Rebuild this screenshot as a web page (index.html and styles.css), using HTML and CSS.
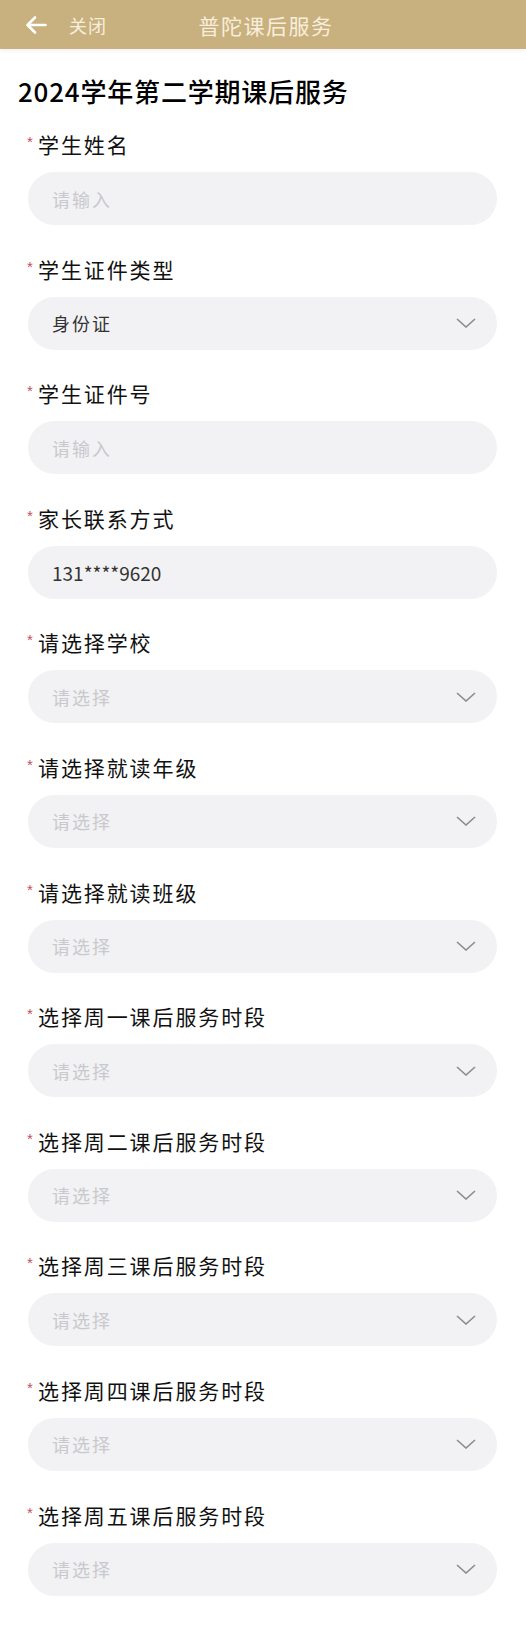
FILE: index.html
```html
<!doctype html>
<html lang="zh-cn">
<head>
	<meta charset="utf-8">
	<title>普陀课后服务</title>
	<link rel="stylesheet" href="styles.css">
</head>
<body>

<!-- 顶部导航 -->
<div class="topBar">
	<div class="topLeft">
		<svg class="backIco" width="22" height="18" viewBox="0 0 22 18"><path d="M2.5 9H20.5M10 1.5L2.5 9L10 16.5" fill="none" stroke="#fff" stroke-width="2.6" stroke-linecap="round" stroke-linejoin="round"/></svg>
		<span class="closeTxt">关闭</span>
	</div>
	<div class="topTitle">普陀课后服务</div>
</div>

<div class="formBox">
	<h1 class="formTit">2024学年第二学期课后服务</h1>

	<div class="item">
		<div class="lab"><i>*</i>学生姓名</div>
		<div class="ipt"><span class="ph">请输入</span></div>
	</div>
	<div class="item">
		<div class="lab"><i>*</i>学生证件类型</div>
		<div class="ipt sel"><span class="val">身份证</span><svg class="arr" width="20" height="10" viewBox="0 0 20 10"><path d="M1 1L10 9L19 1" fill="none" stroke="#8c8c8c" stroke-width="1.6"/></svg></div>
	</div>
	<div class="item">
		<div class="lab"><i>*</i>学生证件号</div>
		<div class="ipt"><span class="ph">请输入</span></div>
	</div>
	<div class="item">
		<div class="lab"><i>*</i>家长联系方式</div>
		<div class="ipt"><span class="val num">131****9620</span></div>
	</div>
	<div class="item">
		<div class="lab"><i>*</i>请选择学校</div>
		<div class="ipt sel"><span class="ph">请选择</span><svg class="arr" width="20" height="10" viewBox="0 0 20 10"><path d="M1 1L10 9L19 1" fill="none" stroke="#8c8c8c" stroke-width="1.6"/></svg></div>
	</div>
	<div class="item">
		<div class="lab"><i>*</i>请选择就读年级</div>
		<div class="ipt sel"><span class="ph">请选择</span><svg class="arr" width="20" height="10" viewBox="0 0 20 10"><path d="M1 1L10 9L19 1" fill="none" stroke="#8c8c8c" stroke-width="1.6"/></svg></div>
	</div>
	<div class="item">
		<div class="lab"><i>*</i>请选择就读班级</div>
		<div class="ipt sel"><span class="ph">请选择</span><svg class="arr" width="20" height="10" viewBox="0 0 20 10"><path d="M1 1L10 9L19 1" fill="none" stroke="#8c8c8c" stroke-width="1.6"/></svg></div>
	</div>
	<div class="item">
		<div class="lab"><i>*</i>选择周一课后服务时段</div>
		<div class="ipt sel"><span class="ph">请选择</span><svg class="arr" width="20" height="10" viewBox="0 0 20 10"><path d="M1 1L10 9L19 1" fill="none" stroke="#8c8c8c" stroke-width="1.6"/></svg></div>
	</div>
	<div class="item">
		<div class="lab"><i>*</i>选择周二课后服务时段</div>
		<div class="ipt sel"><span class="ph">请选择</span><svg class="arr" width="20" height="10" viewBox="0 0 20 10"><path d="M1 1L10 9L19 1" fill="none" stroke="#8c8c8c" stroke-width="1.6"/></svg></div>
	</div>
	<div class="item">
		<div class="lab"><i>*</i>选择周三课后服务时段</div>
		<div class="ipt sel"><span class="ph">请选择</span><svg class="arr" width="20" height="10" viewBox="0 0 20 10"><path d="M1 1L10 9L19 1" fill="none" stroke="#8c8c8c" stroke-width="1.6"/></svg></div>
	</div>
	<div class="item">
		<div class="lab"><i>*</i>选择周四课后服务时段</div>
		<div class="ipt sel"><span class="ph">请选择</span><svg class="arr" width="20" height="10" viewBox="0 0 20 10"><path d="M1 1L10 9L19 1" fill="none" stroke="#8c8c8c" stroke-width="1.6"/></svg></div>
	</div>
	<div class="item">
		<div class="lab"><i>*</i>选择周五课后服务时段</div>
		<div class="ipt sel"><span class="ph">请选择</span><svg class="arr" width="20" height="10" viewBox="0 0 20 10"><path d="M1 1L10 9L19 1" fill="none" stroke="#8c8c8c" stroke-width="1.6"/></svg></div>
	</div>
</div>

</body>
</html>
```

FILE: styles.css
```css
*{ padding: 0; margin: 0; box-sizing: border-box}
body{ background: #fff; font-family: "Noto Sans CJK SC", "Noto Sans", sans-serif; color: #111}

/* 顶部导航 */
.topBar{ position: relative; height: 49px; background: #c9b07f; display: flex; align-items: center; justify-content: center; box-shadow: 0 2px 4px rgba(0,0,0,0.06)}
.topLeft{ position: absolute; left: 25px; top: 0; height: 49px; display: flex; align-items: center}
.backIco{ display: block}
.closeTxt{ margin-left: 22px; font-size: 18px; color: #f7efdc; letter-spacing: 1px}
.topTitle{ font-size: 21px; color: #f7efdc; letter-spacing: 1.5px; padding-left: 6px}

/* 表单 */
.formBox{ padding: 25px 29px 30px 27px}
.formTit{ font-size: 26px; line-height: 34px; font-weight: 500; color: #000; letter-spacing: 0.8px; margin-left: -9px; margin-bottom: 22px}
.item{ margin-bottom: 29.6px}
.lab{ height: 28px; line-height: 28px; font-size: 21px; letter-spacing: 1.9px; color: #111; display: flex; align-items: center}
.lab i{ font-family: "Liberation Sans", sans-serif; font-style: normal; font-size: 15px; color: #c0505f; width: 11px; align-self: flex-start; line-height: 24px}
.ipt{ margin: 14px 0 0 1px; height: 53px; border-radius: 27px; background: #f2f2f4; display: flex; align-items: center; justify-content: space-between; padding: 0 21px 0 24px; font-size: 18px; letter-spacing: 2px}
.ph{ color: #c9c9cd}
.val{ color: #333}
.num{ font-size: 19px; letter-spacing: 0}
.arr{ display: block}
```
